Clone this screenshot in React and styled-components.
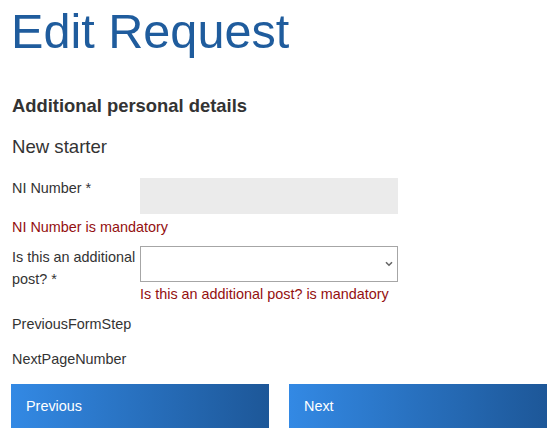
import styled, { createGlobalStyle } from "styled-components";

const Global = createGlobalStyle`
  body {
    margin: 0;
    background: #ffffff;
    font-family: "Liberation Sans", Arial, sans-serif;
    color: #333333;
  }
`;

const Colors = {
  TITLE: "#1f5c9d",
  TEXT: "#333333",
  ERROR: "#941010",
  FIELD: "#ebebeb",
};

const Page = styled.div`
  width: 557px;
  padding: 0 10px 0 11px;
  box-sizing: border-box;
`;

const Title = styled.h1`
  margin: 0;
  padding-top: 3px;
  font-size: 48.6px;
  line-height: 56px;
  font-weight: normal;
  color: ${Colors.TITLE};
`;

const SectionTitle = styled.h2`
  margin: 37px 0 0 1px;
  font-size: 18.4px;
  line-height: 20px;
  font-weight: bold;
`;

const SubTitle = styled.h3`
  margin: 20px 0 0 1px;
  font-size: 18.6px;
  line-height: 21px;
  font-weight: normal;
`;

const FieldRow = styled.div`
  display: grid;
  grid-template-columns: 129px 258px;
  margin-top: ${(p) => p.$top}px;
`;

const Label = styled.label`
  padding-left: 1px;
  font-size: 14.4px;
  line-height: ${(p) => (p.$wrap ? 22 : 20)}px;
`;

const TextBox = styled.div`
  height: 36px;
  background: ${Colors.FIELD};
`;

const SelectBox = styled.div`
  position: relative;
  height: 36px;
  box-sizing: border-box;
  border: 1px solid #a6a6a6;
  background: #fff;
`;

const Chevron = styled.svg`
  position: absolute;
  right: 4px;
  top: 14px;
`;

const Error = styled.div`
  padding-left: ${(p) => (p.$inline ? 0 : 1)}px;
  margin-top: ${(p) => p.$top}px;
  font-size: 14.4px;
  line-height: 20px;
  color: ${Colors.ERROR};
`;

const HiddenLabel = styled.div`
  padding-left: 1px;
  margin-top: ${(p) => p.$top}px;
  font-size: 14.4px;
  line-height: 20px;
`;

const Buttons = styled.div`
  display: flex;
  gap: 20px;
  margin-top: 15px;
`;

const Button = styled.button`
  width: 258px;
  height: 44px;
  padding: 0 15px;
  border: 0;
  text-align: left;
  font-family: "Liberation Sans", Arial, sans-serif;
  font-size: 14.4px;
  color: #ffffff;
  background: linear-gradient(to right, #3389e4, #1d5798);
`;

export default function App() {
  return (
    <Page>
      <Global />
      <Title>Edit Request</Title>
      <SectionTitle>Additional personal details</SectionTitle>
      <SubTitle>New starter</SubTitle>
      <FieldRow $top={21}>
        <Label>NI Number *</Label>
        <TextBox />
      </FieldRow>
      <Error $top={3}>NI Number is mandatory</Error>
      <FieldRow $top={9}>
        <Label $wrap>Is this an additional post? *</Label>
        <div>
          <SelectBox>
            <Chevron width="8" height="6" viewBox="0 0 8 6">
              <path d="M1 1.2 L4 4.2 L7 1.2" fill="none" stroke="#666" strokeWidth="1.6" />
            </Chevron>
          </SelectBox>
          <Error $inline $top={2}>Is this an additional post? is mandatory</Error>
        </div>
      </FieldRow>
      <HiddenLabel $top={10}>PreviousFormStep</HiddenLabel>
      <HiddenLabel $top={15}>NextPageNumber</HiddenLabel>
      <Buttons>
        <Button>Previous</Button>
        <Button>Next</Button>
      </Buttons>
    </Page>
  );
}
